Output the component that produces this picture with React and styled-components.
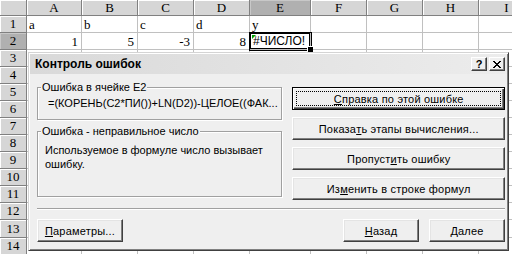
import styled, { createGlobalStyle } from 'styled-components';

const GlobalStyle = createGlobalStyle`
  html, body {
    margin: 0;
    padding: 0;
    background: #ffffff;
  }
  body {
    width: 512px;
    height: 254px;
    overflow: hidden;
  }
`;

const columns = [
    { name: 'A', width: 55 },
    { name: 'B', width: 56 },
    { name: 'C', width: 56 },
    { name: 'D', width: 56 },
    { name: 'E', width: 61 },
    { name: 'F', width: 56 },
    { name: 'G', width: 56 },
    { name: 'H', width: 56 },
    { name: 'I', width: 56 },
];

const rowHeights = [17, 17, 17, 17, 17, 17, 17, 17, 17, 17, 17, 17, 18, 17];

const data = {
    A1: { text: 'a' },
    B1: { text: 'b' },
    C1: { text: 'c' },
    D1: { text: 'd' },
    E1: { text: 'y' },
    A2: { text: '1', num: true },
    B2: { text: '5', num: true },
    C2: { text: '-3', num: true },
    D2: { text: '8', num: true },
};

const ACTIVE = 'E2';

export default function App() {
    return (
        <>
            <GlobalStyle />
            <Page>
                <Sheet>
                    <Corner />
                    { columns.map(col => (
                        <ColHeader key={ col.name } $selected={ col.name === 'E' }>{ col.name }</ColHeader>
                    )) }
                    { rowHeights.map((h, i) => {
                        const row = i + 1;
                        return [
                            <RowHeader key={ 'r' + row } $selected={ row === 2 }>{ row }</RowHeader>,
                            ...columns.map(col => {
                                const id = col.name + row;
                                if (id === ACTIVE) {
                                    return <ActiveCell key={ id }>#ЧИСЛО!</ActiveCell>;
                                }
                                const cell = data[id];
                                return (
                                    <Cell key={ id } $num={ cell && cell.num }>{ cell ? cell.text : '' }</Cell>
                                );
                            }),
                        ];
                    }) }
                </Sheet>

                <Dialog>
                    <TitleBar>
                        <Title>Контроль ошибок</Title>
                        <CaptionButtons>
                            <CaptionButton>?</CaptionButton>
                            <CaptionButton>
                                <svg width="8" height="7" viewBox="0 0 8 7" shapeRendering="crispEdges">
                                    <path d="M0 0h2v1h-2zM6 0h2v1h-2zM1 1h2v1h-2zM5 1h2v1h-2zM2 2h4v1h-4zM3 3h2v1h-2zM2 4h4v1h-4zM1 5h2v1h-2zM5 5h2v1h-2zM0 6h2v1h-2zM6 6h2v1h-2z" fill="#000" />
                                </svg>
                            </CaptionButton>
                        </CaptionButtons>
                    </TitleBar>

                    <Body>
                        <TopRow>
                            <LeftCol>
                                <Group $height={ 39 }>
                                    <Legend>Ошибка в ячейке E2</Legend>
                                    <Formula>=(КОРЕНЬ(C2*ПИ())+LN(D2))-ЦЕЛОЕ((ФАК...</Formula>
                                </Group>
                                <Group $height={ 72 }>
                                    <Legend>Ошибка - неправильное число</Legend>
                                    <Message>
                                        Используемое в формуле число вызывает<br />ошибку.
                                    </Message>
                                </Group>
                            </LeftCol>
                            <RightCol>
                                <Button $default $focused><u>С</u>правка по этой ошибке</Button>
                                <Button>Показа<u>т</u>ь этапы вычисления...</Button>
                                <Button>Пропуст<u>и</u>ть ошибку</Button>
                                <Button>Из<u>м</u>енить в строке формул</Button>
                            </RightCol>
                        </TopRow>

                        <Separator />

                        <BottomRow>
                            <Button $width={ 86 }><u>П</u>араметры...</Button>
                            <Spacer />
                            <Button $width={ 76 }><u>Н</u>азад</Button>
                            <Button $width={ 76 }><u>Д</u>алее</Button>
                        </BottomRow>
                    </Body>
                </Dialog>
            </Page>
        </>
    );
}

const Page = styled.div`
    position: relative;
    width: 512px;
    height: 254px;
    overflow: hidden;
`;

const Sheet = styled.div`
    display: grid;
    grid-template-columns: 27px ${ columns.map(c => c.width + 'px').join(' ') };
    grid-template-rows: 16px ${ rowHeights.map(h => h + 'px').join(' ') };
    font-family: "Liberation Serif", "Times New Roman", serif;
    font-size: 13px;
    color: #000;
`;

const HeaderBase = styled.div`
    box-sizing: border-box;
    display: flex;
    align-items: center;
    justify-content: center;
    background: ${ p => p.$selected ? '#b0b0b0' : '#d6d6d6' };
    border-right: 1px solid #808080;
    border-bottom: 1px solid #808080;
    box-shadow: inset 1px 1px 0 ${ p => p.$selected ? '#c8c8c8' : '#ffffff' };
    line-height: 14px;
`;

const Corner = styled(HeaderBase)``;

const ColHeader = styled(HeaderBase)``;

const RowHeader = styled(HeaderBase)``;

const Cell = styled.div`
    position: relative;
    box-sizing: border-box;
    display: flex;
    align-items: center;
    justify-content: ${ p => p.$num ? 'flex-end' : 'flex-start' };
    padding: 0 3px 0 2px;
    border-right: 1px solid #c0c0c0;
    border-bottom: 1px solid #c0c0c0;
    background: #fff;
    white-space: nowrap;
    line-height: 15px;
`;

const ActiveCell = styled(Cell)`
    z-index: 1;
    font-family: "Liberation Sans", Arial, sans-serif;
    font-size: 12px;
    padding-left: 3px;
    box-shadow: 0 0 0 1px #000, inset 0 0 0 1px #000;

    &::before {
        content: '';
        position: absolute;
        left: 2px;
        top: 2px;
        border-top: 4px solid #00a000;
        border-right: 4px solid transparent;
    }

    &::after {
        content: '';
        position: absolute;
        right: -3px;
        bottom: -3px;
        width: 5px;
        height: 5px;
        background: #000;
        box-shadow: -1px -1px 0 #fff;
    }
`;

const Dialog = styled.div`
    position: absolute;
    left: 28px;
    top: 52px;
    z-index: 5;
    width: 481px;
    height: 199px;
    box-sizing: border-box;
    padding: 1px;
    display: flex;
    flex-direction: column;
    background: #efefef;
    border: 1px solid;
    border-color: #d4d4d4 #404040 #404040 #d4d4d4;
    box-shadow: inset 1px 1px 0 #ffffff, inset -1px -1px 0 #808080;
    font-family: "Liberation Sans", Arial, sans-serif;
    font-size: 11px;
    color: #000;
`;

const TitleBar = styled.div`
    height: 20px;
    display: flex;
    align-items: center;
    justify-content: space-between;
    padding: 0 2px 0 5px;
    background: linear-gradient(to right, #d9d9d9, #ececec);
`;

const Title = styled.div`
    font-size: 12px;
    font-weight: bold;
`;

const CaptionButtons = styled.div`
    display: flex;
    gap: 2px;
`;

const CaptionButton = styled.div`
    width: 16px;
    height: 14px;
    box-sizing: border-box;
    display: flex;
    align-items: center;
    justify-content: center;
    background: #efefef;
    border: 1px solid;
    border-color: #ffffff #404040 #404040 #ffffff;
    box-shadow: inset -1px -1px 0 #808080;
    font-size: 11px;
    font-weight: bold;
    line-height: 1;
`;

const Body = styled.div`
    flex: 1;
    display: flex;
    flex-direction: column;
    padding: 7px 2px 0 7px;
`;

const TopRow = styled.div`
    display: flex;
    gap: 10px;
    height: 119px;
`;

const LeftCol = styled.div`
    width: 246px;
    display: flex;
    flex-direction: column;
    gap: 5px;
`;

const Group = styled.fieldset`
    box-sizing: border-box;
    height: ${ p => p.$height }px;
    margin: 0;
    padding: 0 3px;
    min-width: 0;
    border: 1px solid #a0a0a0;
    box-shadow: inset 1px 1px 0 #ffffff, 1px 1px 0 #ffffff;
`;

const Legend = styled.legend`
    padding: 0 1px;
    margin: 0;
    line-height: 13px;
    font-size: 11px;
    background: #efefef;
`;

const Formula = styled.div`
    padding: 3px 0 0 7px;
    line-height: 13px;
    white-space: nowrap;
    overflow: hidden;
`;

const Message = styled.div`
    padding: 5px 0 0 4px;
    line-height: 14px;
`;

const RightCol = styled.div`
    width: 213px;
    display: flex;
    flex-direction: column;
    gap: 7px;
    padding-top: 6px;
`;

const Button = styled.div`
    position: relative;
    box-sizing: border-box;
    width: ${ p => p.$width ? p.$width + 'px' : '100%' };
    height: 23px;
    display: flex;
    align-items: center;
    justify-content: center;
    background: #efefef;
    border: 1px solid;
    border-color: ${ p => p.$default ? '#000' : '#ffffff #404040 #404040 #ffffff' };
    box-shadow: ${ p => p.$default
        ? 'inset 1px 1px 0 #ffffff, inset -1px -1px 0 #404040, inset -2px -2px 0 #808080'
        : 'inset -1px -1px 0 #808080, inset 1px 1px 0 #e4e4e4' };
    font-size: 11px;
    letter-spacing: 0.2px;
    white-space: nowrap;

    & u {
        text-decoration: underline;
        text-underline-offset: 1px;
    }

    ${ p => p.$focused && `
        &::after {
            content: '';
            position: absolute;
            inset: 3px;
            border: 1px dotted #000;
        }
    ` }
`;

const Separator = styled.div`
    margin-top: 8px;
    height: 0;
    border-top: 1px solid #a0a0a0;
    border-bottom: 1px solid #ffffff;
`;

const BottomRow = styled.div`
    display: flex;
    gap: 10px;
    margin-top: 9px;
`;

const Spacer = styled.div`
    flex: 1;
`;
